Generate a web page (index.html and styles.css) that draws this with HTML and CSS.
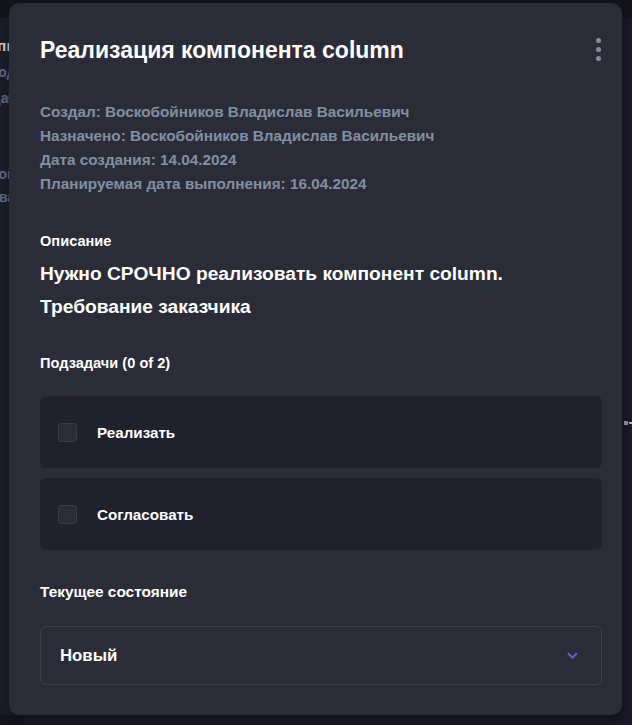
FILE: index.html
```html
<!DOCTYPE html>
<html lang="ru">
<head>
<meta charset="utf-8">
<title>Реализация компонента column</title>
<link rel="stylesheet" href="styles.css">
</head>
<body>
<div class="board">
  <div class="topbar"></div>
  <div class="board-body">
    <div class="peek">
      <div class="peek-line strong"><span>Опис</span></div>
      <div class="peek-line"><span>Подп</span></div>
      <div class="peek-line"><span>Задача</span></div>
      <div class="peek-gap"></div>
      <div class="peek-line"><span>Воскобойн</span></div>
      <div class="peek-line"><span>Согласовал</span></div>
    </div>
    <div class="board-rest">
      <div class="peek-right"><span class="mini-sq"></span><span class="mini-t">T</span></div>
    </div>
  </div>
</div>

<div class="modal">
  <div class="modal-head">
    <h1 class="modal-title">Реализация компонента column</h1>
    <button class="kebab" aria-label="Меню">
      <svg width="5" height="24" viewBox="0 0 5 24"><circle cx="2.5" cy="2.5" r="2.5"/><circle cx="2.5" cy="11.5" r="2.5"/><circle cx="2.5" cy="20.5" r="2.5"/></svg>
    </button>
  </div>

  <div class="meta">
    <div>Создал: Воскобойников Владислав Васильевич</div>
    <div>Назначено: Воскобойников Владислав Васильевич</div>
    <div>Дата создания: 14.04.2024</div>
    <div>Планируемая дата выполнения: 16.04.2024</div>
  </div>

  <div class="label label-desc">Описание</div>
  <p class="desc">Нужно СРОЧНО реализовать компонент column.<br>Требование заказчика</p>

  <div class="label label-sub">Подзадачи (0 of 2)</div>
  <div class="subtasks">
    <label class="subtask"><span class="check"></span><span class="subtask-text">Реализать</span></label>
    <label class="subtask"><span class="check"></span><span class="subtask-text">Согласовать</span></label>
  </div>

  <div class="label label-state">Текущее состояние</div>
  <div class="select">
    <span class="select-value">Новый</span>
    <svg class="chev" width="11" height="7" viewBox="0 0 11 7"><path d="M1 1.2l4.5 4.3 4.5-4.3" fill="none" stroke="#635FC7" stroke-width="2.2"/></svg>
  </div>
</div>
</body>
</html>
```

FILE: styles.css
```css
* { box-sizing: border-box; }
html, body { margin: 0; padding: 0; }
body {
  width: 632px;
  height: 725px;
  overflow: hidden;
  background: #14141d;
  font-family: "Liberation Sans", Arial, sans-serif;
  position: relative;
}

.board { height: 725px; display: flex; flex-direction: column; }
.topbar { height: 18px; background: #13131b; flex: none; }
.board-body { flex: 1; display: flex; }
.peek {
  width: 24px;
  background: #1c1c29;
  padding-top: 15px;
  overflow: hidden;
  flex: none;
  height: 697px;
}
.peek-line {
  display: flex;
  justify-content: flex-end;
  white-space: nowrap;
  font-size: 14px;
  line-height: 26px;
  color: #5f6680;
  font-weight: 700;
}
.peek-line.strong { color: #c9c9d4; font-size: 15px; }
.peek-gap { height: 50px; }
.peek-line:last-child { line-height: 20px; }
.board-rest {
  flex: 1;
  background: #181826;
  position: relative;
}
.peek-right {
  position: absolute;
  left: 600px;
  top: 398px;
  display: flex;
  align-items: flex-start;
  gap: 1px;
}
.mini-sq { width: 4px; height: 4px; background: #8d8d97; margin-top: 5px; }
.mini-t { font-size: 14px; color: #c6cbe8; font-weight: 700; line-height: 22px; }

.modal {
  position: absolute;
  left: 9px;
  top: 3px;
  width: 613px;
  height: 712px;
  background: #2B2C37;
  border-radius: 10px;
  padding: 34px 20px 30px 31px;
  box-shadow: 0 4px 10px rgba(0,0,0,0.25);
}

.modal-head {
  display: flex;
  align-items: center;
  justify-content: space-between;
}
.modal-title {
  margin: 0;
  font-size: 23px;
  line-height: 26px;
  font-weight: 700;
  color: #ffffff;
}
.kebab {
  background: none;
  border: 0;
  padding: 0;
  margin-right: 1px;
  display: flex;
  fill: #828FA3;
  cursor: pointer;
}

.meta {
  margin-top: 37px;
  font-size: 15.3px;
  line-height: 24px;
  font-weight: 700;
  color: #828FA3;
}

.label {
  font-size: 14.6px;
  line-height: 20px;
  font-weight: 700;
  color: #ffffff;
}
.label-desc { margin-top: 35px; }
.desc {
  margin: 6px 0 0;
  font-size: 19.2px;
  line-height: 33px;
  font-weight: 700;
  color: #ffffff;
}
.label-sub { margin-top: 30px; }

.subtasks {
  margin-top: 23px;
  display: flex;
  flex-direction: column;
  gap: 10px;
}
.subtask {
  height: 72px;
  background: #20212C;
  border-radius: 6px;
  display: flex;
  align-items: center;
  padding-left: 18px;
  gap: 20px;
  cursor: pointer;
}
.check {
  width: 19px;
  height: 19px;
  border-radius: 3px;
  background: #2B2C37;
  border: 1px solid #3a3b48;
  flex: none;
}
.subtask-text {
  font-size: 15.2px;
  font-weight: 700;
  color: #ffffff;
}

.label-state { margin-top: 32px; font-size: 15.4px; }
.select {
  margin-top: 24px;
  height: 59px;
  border: 1px solid #3E3F4E;
  border-radius: 6px;
  display: flex;
  align-items: center;
  justify-content: space-between;
  padding: 0 23px 0 19px;
}
.select-value {
  font-size: 16.8px;
  font-weight: 700;
  color: #ffffff;
}
.chev { display: block; }
```
